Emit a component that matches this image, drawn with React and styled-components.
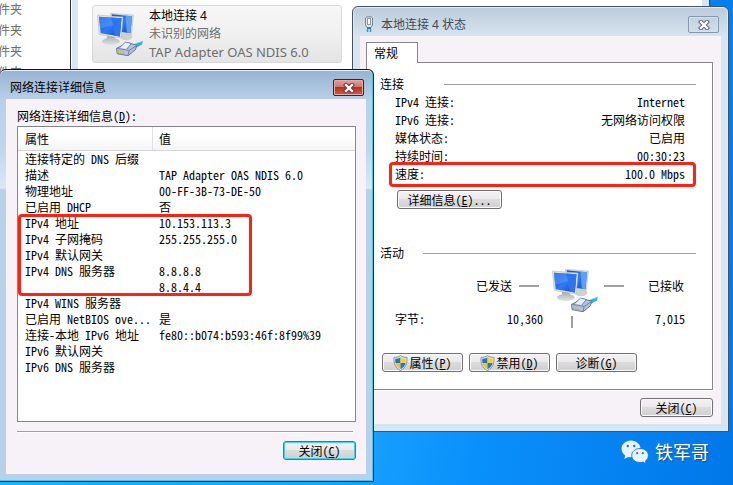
import React from "react";
import styled, { createGlobalStyle, css } from "styled-components";

const details = [
  ["连接特定的 DNS 后缀", ""],
  ["描述", "TAP Adapter OAS NDIS 6.0"],
  ["物理地址", "00-FF-3B-73-DE-50"],
  ["已启用 DHCP", "否"],
  ["IPv4 地址", "10.153.113.3"],
  ["IPv4 子网掩码", "255.255.255.0"],
  ["IPv4 默认网关", ""],
  ["IPv4 DNS 服务器", "8.8.8.8"],
  ["", "8.8.4.4"],
  ["IPv4 WINS 服务器", ""],
  ["已启用 NetBIOS ove...", "是"],
  ["连接-本地 IPv6 地址", "fe80::b074:b593:46f:8f99%39"],
  ["IPv6 默认网关", ""],
  ["IPv6 DNS 服务器", ""]
];

const connection = [
  ["IPv4 连接:", "Internet"],
  ["IPv6 连接:", "无网络访问权限"],
  ["媒体状态:", "已启用"],
  ["持续时间:", "00:30:23"],
  ["速度:", "100.0 Mbps"]
];

function NetworkIcon() {
  return (
    <svg width="47" height="45" viewBox="548 84 142 134" aria-hidden="true">
      <defs>
        <linearGradient id="screen" x1="0" y1="0" x2="1" y2="1">
          <stop offset="0" stopColor="#0d48d0" />
          <stop offset="0.5" stopColor="#2f7bf0" />
          <stop offset="1" stopColor="#0b45d8" />
        </linearGradient>
        <linearGradient id="stand" x1="0" y1="0" x2="0" y2="1">
          <stop offset="0" stopColor="#b4b8b8" />
          <stop offset="1" stopColor="#e2e4e4" />
        </linearGradient>
      </defs>
      <ellipse cx="636" cy="158" rx="19" ry="10" fill="#cdd1d0" />
      <path d="M588 87 L658 92 L652 151 L600 146 Z" fill="#d9dcd5" stroke="#b9bdb5" strokeWidth="1.5" />
      <path d="M592 90 L654 96 L649 147 L604 141 Z" fill="url(#screen)" />
      <path d="M634 94 L654 96 L649 147 L638 145 Z" fill="#5c9ffa" />
      <path d="M579 152 L601 155 L602 170 L577 168 Z" fill="#a9adad" />
      <ellipse cx="590" cy="172" rx="27" ry="11" fill="url(#stand)" />
      <path d="M549 92 L627 98 L621 162 L555 151 Z" fill="#e2e4dc" stroke="#b0b4ac" strokeWidth="1.5" />
      <path d="M554 97 L622 102 L617 157 L559 147 Z" fill="url(#screen)" />
      <path d="M590 100 L622 102 L617 157 L602 154 Z" fill="#2d74ee" />
      <path d="M554 97 L590 100 L597 122 L557 134 Z" fill="#5a9df7" opacity="0.6" />
      <path d="M656 182 L687 170 L684 181 L662 193 Z" fill="#2fb3dc" />
      <path d="M664 178 L687 171" stroke="#8ee0f4" strokeWidth="2" />
      <path d="M607 193 L640 176 L668 183 L664 197 L642 215 L609 209 Z" fill="#b4c3dc" stroke="#62749a" strokeWidth="3" />
      <path d="M609 193 L645 199 L667 185 M645 199 L642 214" fill="none" stroke="#62749a" strokeWidth="2.5" />
      <path d="M616 191 L634 174 L652 178 L638 195" fill="#e6eef8" stroke="#62749a" strokeWidth="2.5" />
      <path d="M613 199 V207 M620 200 V208 M627 201 V209" stroke="#c9b75e" strokeWidth="4" />
    </svg>
  );
}

function Shield() {
  return (
    <svg width="15" height="16" viewBox="0 0 15 16" aria-hidden="true">
      <path d="M7.5 0.5 C9.5 2 12 2.5 14 2.4 C14.4 8 13 13 7.5 15.6 C2 13 0.6 8 1 2.4 C3 2.5 5.5 2 7.5 0.5 Z" fill="#dfe3e6" stroke="#8d979f" />
      <path d="M7.5 2.2 V8 H2.4 C2.2 6.5 2.2 5 2.3 3.8 C4.4 3.8 6 3.2 7.5 2.2 Z" fill="#1c74cc" />
      <path d="M7.5 2.2 V8 H12.6 C12.8 6.5 12.8 5 12.7 3.8 C10.6 3.8 9 3.2 7.5 2.2 Z" fill="#fbd221" />
      <path d="M7.5 8 V14.2 C4.6 12.8 3 10.8 2.4 8 Z" fill="#f8c414" />
      <path d="M7.5 8 V14.2 C10.4 12.8 12 10.8 12.6 8 Z" fill="#2178cf" />
    </svg>
  );
}

function PlugIcon() {
  return (
    <svg width="10" height="17" viewBox="0 0 10 17" aria-hidden="true">
      <path d="M1.5 2 L3 0.8 H7 L8.5 2 V9 L7 11.5 H3 L1.5 9 Z" fill="#dfe5ea" stroke="#7a858e" />
      <rect x="3.5" y="2.5" width="3" height="6" fill="#fff" stroke="#8d98a2" />
      <path d="M3 11 H7 V13 H3 Z" fill="#2d83b5" />
      <path d="M3.5 13 V16 M6.5 13 V16" stroke="#1ba6dd" strokeWidth="1.6" />
    </svg>
  );
}

function Cross({ outline }) {
  return (
    <svg width="12" height="10" viewBox="0 0 12 10" aria-hidden="true">
      <path d="M3 2 L9 8 M9 2 L3 8" stroke={outline} strokeWidth="4.4" strokeLinecap="square" />
      <path d="M3 2 L9 8 M9 2 L3 8" stroke="#fff" strokeWidth="2.2" strokeLinecap="square" />
    </svg>
  );
}

function WeChatLogo() {
  return (
    <svg width="28" height="25" viewBox="0 0 28 25" aria-hidden="true">
      <path d="M10 0.5 C4.5 0.5 0.5 4.2 0.5 8.8 C0.5 11.6 2 14 4.3 15.6 L3.2 19 L7.2 17 C11 18 19.5 16 19.5 8.8 C19.5 4.2 15.4 0.5 10 0.5 Z" fill="#e8f3ff" />
      <path d="M19 8.5 C14.3 8.5 10.7 11.6 10.7 15.5 C10.7 19.4 14.3 22.5 19 22.5 C20 22.5 21 22.3 22 22 L25.2 24 L24.4 21 C26.3 19.7 27.4 17.7 27.4 15.5 C27.4 11.6 23.7 8.5 19 8.5 Z" fill="#e8f3ff" stroke="#1a76d8" strokeWidth="0.9" />
      <circle cx="6.8" cy="6" r="1.2" fill="#2b71b8" />
      <circle cx="13.3" cy="6" r="1.2" fill="#2b71b8" />
      <circle cx="16.2" cy="13.2" r="1.1" fill="#2b71b8" />
      <circle cx="21.8" cy="13.2" r="1.1" fill="#2b71b8" />
    </svg>
  );
}

export default function App() {
  return (
    <Desktop>
      <GlobalStyle />
      <Explorer>
        <TypeColumn>
          <span>件夹</span>
          <span>件夹</span>
          <span>件夹</span>
          <span>件夹</span>
        </TypeColumn>
        <Connections>
          <Adapter>
            <NetworkIcon />
            <AdapterText>
              <AdapterName>本地连接 4</AdapterName>
              <span>未识别的网络</span>
              <AdapterModel>TAP Adapter OAS NDIS 6.0</AdapterModel>
            </AdapterText>
          </Adapter>
        </Connections>
      </Explorer>

      <StatusWindow>
        <TitleBar>
          <PlugIcon />
          <Title $muted>本地连接 4 状态</Title>
          <CloseButton aria-label="关闭">
            <Cross outline="#626b78" />
          </CloseButton>
        </TitleBar>
        <StatusBody>
          <Tab>常规</Tab>
          <TabPanel>
            <GroupTitle $gap="40px">连接</GroupTitle>
            <Facts>
              {connection.map(([label, value]) => (
                <Fact key={label}>
                  <dt>{label}</dt>
                  <dd>{value}</dd>
                </Fact>
              ))}
              <SpeedMark />
            </Facts>
            <DetailsButton>详细信息(<u>E</u>)...</DetailsButton>

            <Activity>
              <GroupTitle $gap="19px">活动</GroupTitle>
              <Traffic>
                <Sent>
                  已发送
                  <Dash />
                </Sent>
                <NetworkIcon />
                <Received>
                  <Dash />
                  已接收
                </Received>
              </Traffic>
              <Bytes>
                <SentBytes>
                  <span>字节:</span>
                  <span>10,360</span>
                </SentBytes>
                <Tick />
                <ReceivedBytes>7,015</ReceivedBytes>
              </Bytes>
            </Activity>

            <Actions>
              <Button $wide>
                <Shield />
                <span>属性(<u>P</u>)</span>
              </Button>
              <Button $wide>
                <Shield />
                <span>禁用(<u>D</u>)</span>
              </Button>
              <Button $wide>
                <span>诊断(<u>G</u>)</span>
              </Button>
            </Actions>
          </TabPanel>
          <Footer>
            <Button><span>关闭(<u>C</u>)</span></Button>
          </Footer>
        </StatusBody>
      </StatusWindow>

      <DetailsWindow>
        <TitleBar>
          <Title>网络连接详细信息</Title>
          <CloseButton $active aria-label="关闭">
            <Cross outline="#64404a" />
          </CloseButton>
        </TitleBar>
        <DetailsBody>
          <ListLabel id="list-label">网络连接详细信息(<u>D</u>):</ListLabel>
          <ListBox>
            <Table aria-labelledby="list-label">
              <thead>
                <tr>
                  <th>属性</th>
                  <th>值</th>
                </tr>
              </thead>
              <tbody>
                {details.map(([name, value], i) => (
                  <tr key={i}>
                    <td>{name}</td>
                    <td>{value}</td>
                  </tr>
                ))}
              </tbody>
            </Table>
            <AddressMark />
          </ListBox>
          <Rule />
          <Footer>
            <Button $focused><span>关闭(<u>C</u>)</span></Button>
          </Footer>
        </DetailsBody>
      </DetailsWindow>

      <Signature>
        <WeChatLogo />
        铁军哥
      </Signature>
    </Desktop>
  );
}

const GlobalStyle = createGlobalStyle`
  * {
    box-sizing: border-box;
  }
  body {
    margin: 0;
  }
`;

const sans = css`
  font-family: "Noto Sans", "Noto Sans CJK SC", sans-serif;
`;

const Desktop = styled.main`
  position: relative;
  min-height: 100vh;
  overflow: hidden;
  background: linear-gradient(100deg, #27aefc 0%, #1ba5ff 50%, #0a90fb 68%, #0077e8 100%);
  font-family: "Noto Sans Mono CJK SC", "Liberation Mono", "Noto Sans CJK SC", monospace;
  font-size: 12px;
  line-height: 16px;
  color: #000;
  white-space: nowrap;
`;

const Explorer = styled.section`
  display: flex;
  height: 300px;
  margin-right: 23px;
  background: #fff;
  border-right: 1px solid #2c4a6c;
  box-shadow: inset -7px 0 #d8e5f3;
  ${sans}
  color: #6d6d6d;
`;

const TypeColumn = styled.div`
  display: flex;
  flex-direction: column;
  gap: 5px;
  width: 71px;
  padding-top: 2px;
  border-right: 1px solid #333;

  span {
    margin-left: -2px;
  }
`;

const Connections = styled.div`
  flex: 1;
  margin-left: 1px;
  padding: 5px 14px;
  border-left: 6px solid #d8e5f3;
`;

const Adapter = styled.div`
  display: flex;
  align-items: center;
  gap: 5px;
  width: 250px;
  height: 58px;
  padding: 0 4px;
  background: linear-gradient(#f7f7f7, #f0f0f0 50%, #e4e4e4);
  border: 1px solid #d9d9d9;
  border-radius: 3px;
`;

const AdapterText = styled.div`
  display: flex;
  flex-direction: column;
  line-height: 18px;
`;

const AdapterName = styled.span`
  color: #000;
`;

const AdapterModel = styled.span`
  font-size: 13px;
`;

const windowFrame = css`
  position: absolute;
  border: 1px solid #10161c;
  border-radius: 6px 6px 0 0;
`;

const StatusWindow = styled.section`
  ${windowFrame}
  top: 6px;
  left: 352px;
  right: 4px;
  padding: 0 7px 7px;
  border-color: #45525f;
  background: linear-gradient(#bccbd9, #d7e5f2 30px);
  box-shadow: inset 0 0 0 1px #dfeaf5;
`;

const DetailsWindow = styled.section`
  ${windowFrame}
  top: 69px;
  left: 0;
  right: 359px;
  padding: 0 7px 7px 6px;
  border-left: 0;
  background: linear-gradient(#97b3d2, #b9d0e9 30px, #c1d6ed 80px, #dbe8f5 118px, #b9d0e9 120px);
  box-shadow: inset -1px -1px #2ad2ee, inset 0 1px #e3eefa;
`;

const TitleBar = styled.header`
  display: flex;
  align-items: center;
  gap: 7px;
  height: 29px;
  padding: 6px 2px 0 4px;
`;

const Title = styled.h1`
  flex: 1;
  margin: 0;
  ${sans}
  font-size: 12px;
  font-weight: 400;
  color: ${props => (props.$muted ? "#3d4a56" : "#000")};
`;

const CloseButton = styled.button`
  display: flex;
  align-items: center;
  justify-content: center;
  width: 31px;
  height: 17px;
  padding: 0;
  border: 1px solid ${props => (props.$active ? "#4a1d22" : "#8794ad")};
  border-radius: 2px;
  background: ${props =>
    props.$active
      ? "linear-gradient(#e3a398, #cf7366 48%, #b7301d 50%, #c9604a)"
      : "linear-gradient(#c3d1df, #d0dded)"};
  box-shadow: inset 0 0 0 1px ${props => (props.$active ? "#e5aaa2" : "#d6e1ee")};
`;

const StatusBody = styled.div`
  padding: 6px 8px 7px 6px;
  background: #f6f2f7;
`;

const DetailsBody = styled.div`
  padding: 9px 10px 14px 11px;
  background: #f6f2f7;
`;

const Tab = styled.button`
  display: block;
  position: relative;
  z-index: 1;
  width: 52px;
  height: 21px;
  margin-bottom: -1px;
  padding: 0 0 0 7px;
  border: 1px solid #87868c;
  border-bottom: 0;
  background: #fff;
  color: #000;
  font: inherit;
  text-align: left;
`;

const TabPanel = styled.div`
  padding: 12px 16px 17px 13px;
  border: 1px solid #87868c;
  background: #fff;
  box-shadow: 1px 1px #fff;
`;

const GroupTitle = styled.h2`
  display: flex;
  align-items: center;
  gap: ${props => props.$gap};
  margin: 0;
  font-size: 12px;
  font-weight: 400;
  line-height: 18px;

  &::after {
    content: "";
    flex: 1;
    height: 1px;
    background: #a0a0a0;
  }
`;

const Facts = styled.dl`
  position: relative;
  margin: 0;
  padding: 0 11px 0 15px;
  line-height: 18px;
`;

const Fact = styled.div`
  display: flex;
  justify-content: space-between;

  dd {
    margin: 0;
  }
`;

const mark = css`
  position: absolute;
  border: 3px solid #ff2213;
  border-radius: 4px;
  pointer-events: none;
`;

const SpeedMark = styled.div`
  ${mark}
  left: 9px;
  right: 0;
  bottom: -4px;
  height: 25px;
`;

const AddressMark = styled.div`
  ${mark}
  top: 87px;
  left: 0;
  right: 103px;
  height: 82px;
`;

const Button = styled.button`
  display: flex;
  align-items: center;
  justify-content: center;
  gap: 1px;
  width: ${props => (props.$wide ? "81px" : "73px")};
  height: 19px;
  padding: 0;
  border: 1px solid ${props => (props.$focused ? "#2f7fae" : "#707070")};
  border-radius: 3px;
  background: linear-gradient(#f3f1f3, #ebe9eb 48%, #dcdcdc 50%, #cfcfcf);
  box-shadow: inset 0 0 0 1px ${props => (props.$focused ? "#3fd3f3" : "#fafafa")};
  color: #000;
  font: inherit;
  line-height: 16px;
`;

const DetailsButton = styled(Button)`
  width: 105px;
  margin: 7px 0 0 17px;
  gap: 0;
`;

const Activity = styled.section`
  margin-top: 35px;
`;

const Traffic = styled.div`
  display: grid;
  grid-template-columns: 172px 47px 1fr;
  margin-top: 6px;
`;

const Sent = styled.div`
  display: flex;
  align-items: center;
  justify-content: flex-end;
  gap: 7px;
  padding: 0 13px 10px 0;
`;

const Received = styled.div`
  display: flex;
  align-items: center;
  justify-content: space-between;
  padding: 0 12px 10px 5px;
`;

const Dash = styled.span`
  width: 20px;
  height: 2px;
  background: #a0a0a0;
`;

const Bytes = styled.div`
  display: grid;
  grid-template-columns: 172px 47px 1fr;
  height: 15px;
  line-height: 12px;
`;

const SentBytes = styled.div`
  display: flex;
  justify-content: space-between;
  padding: 0 9px 0 15px;
`;

const ReceivedBytes = styled.div`
  padding-right: 11px;
  text-align: right;
`;

const Tick = styled.span`
  align-self: end;
  width: 2px;
  height: 12px;
  margin-left: 19px;
  background: #a0a0a0;
`;

const Actions = styled.div`
  display: flex;
  gap: 6px;
  margin: 25px 0 0 2px;
`;

const Footer = styled.footer`
  display: flex;
  justify-content: flex-end;
  margin-top: 8px;
`;

const ListLabel = styled.div`
  margin-bottom: 2px;
`;

const ListBox = styled.div`
  position: relative;
  min-height: 296px;
  border: 1px solid #828790;
  background: #fff;
`;

const Table = styled.table`
  width: 100%;
  border-collapse: separate;
  border-spacing: 0;
  table-layout: fixed;

  th {
    height: 24px;
    padding: 0 6px;
    border-bottom: 1px solid #d5d5d5;
    background: linear-gradient(#fff 45%, #f3f4f6);
    font-weight: 400;
    text-align: left;
  }

  th:first-child {
    width: 135px;
    border-right: 1px solid #dfe0e3;
  }

  td {
    height: 16px;
    padding: 0 6px;
  }

  th:first-child,
  td:first-child {
    padding: 0 0 0 7px;
  }
`;

const Rule = styled.hr`
  height: 2px;
  margin: 9px 3px 0 0;
  border: 0;
  border-top: 1px solid #a0a0a0;
  background: #fff;
`;

const Signature = styled.div`
  display: flex;
  position: absolute;
  right: 24px;
  bottom: 20px;
  align-items: center;
  gap: 6px;
  ${sans}
  font-size: 18px;
  line-height: 26px;
  color: #fff;
  text-shadow: 1px 1px 1px #174f8b;
`;
